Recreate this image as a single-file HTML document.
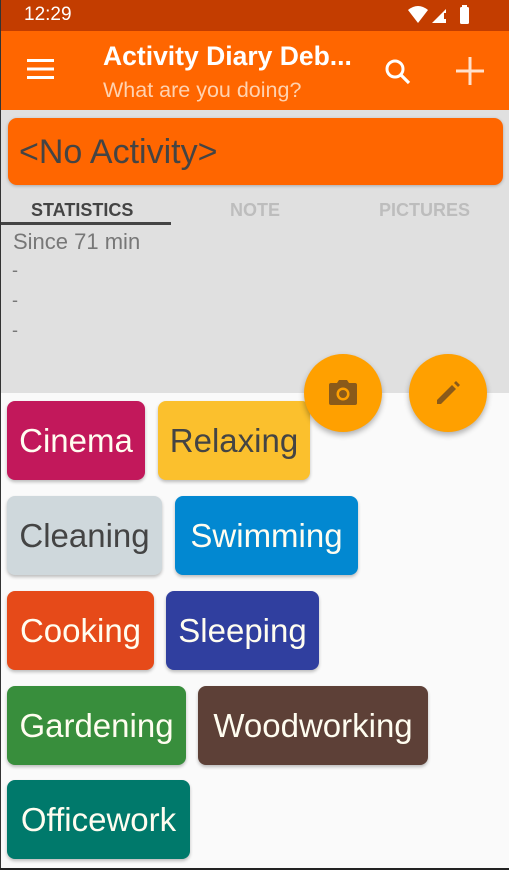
<!DOCTYPE html>
<html><head><meta charset="utf-8">
<style>
*{margin:0;padding:0;box-sizing:border-box}
body{width:509px;height:870px;overflow:hidden;font-family:"Liberation Sans",Roboto,sans-serif;background:#fafafa;position:relative}
.abs{position:absolute}
#edgeL{left:0;top:0;width:1px;height:870px;background:#333;z-index:9}
#edgeB{left:0;top:868px;width:509px;height:2px;background:#222;z-index:9}
#status{left:0;top:0;width:509px;height:31px;background:#c33d00;color:#fff;font-size:19px}
#bar{left:0;top:31px;width:509px;height:79px;background:#ff6600}
#gray{left:0;top:110px;width:509px;height:283px;background:#e0e0e0}
#card{left:8px;top:118px;width:495px;height:67px;background:#ff6600;border-radius:9px;box-shadow:0 1px 3px rgba(0,0,0,.25);color:#444;font-size:34px;line-height:69px;padding-left:11px}
.tab{top:200px;font-size:18px;font-weight:bold;color:#bdbdbd}
.chip{height:79px;border-radius:8px;font-size:33px;line-height:80px;text-align:center;color:#fffdf0;box-shadow:0 2px 3px rgba(0,0,0,.25);white-space:nowrap}
.fab{width:78px;height:78px;border-radius:50%;background:#ffa000;box-shadow:0 3px 6px rgba(0,0,0,.3);display:flex;align-items:center;justify-content:center}
.dash{left:12px;font-size:18px;color:#777}
</style></head><body>
<div class="abs" id="edgeL"></div><div class="abs" id="edgeB"></div>
<div class="abs" id="status">
 <div class="abs" style="left:24px;top:4px">12:29</div>
 <svg class="abs" style="left:408px;top:5px" width="64" height="20" viewBox="0 0 64 20">
  <path d="M0 5 Q10 -3 20 5 L10 18 Z" fill="#fff"/>
  <path d="M24 18 L38 4 L38 18 Z" fill="#fff"/>
  <rect x="36" y="8" width="2" height="6" fill="#c33d00"/>
  <rect x="52" y="2" width="9" height="17" rx="1.5" fill="#fff"/><rect x="54" y="0" width="5" height="3" fill="#fff"/>
 </svg>
</div>
<div class="abs" id="bar">
 <svg class="abs" style="left:27px;top:28px" width="27" height="20"><rect y="0" width="27" height="3" fill="#fff"/><rect y="8.5" width="27" height="3" fill="#fff"/><rect y="17" width="27" height="3" fill="#fff"/></svg>
 <div class="abs" style="left:103px;top:10px;color:#fff;font-size:26.5px;font-weight:bold">Activity Diary Deb...</div>
 <div class="abs" style="left:103px;top:47px;color:#ffd2b0;font-size:21.5px">What are you doing?</div>
 <svg class="abs" style="left:384px;top:27px" width="28" height="28" viewBox="0 0 28 28"><circle cx="11" cy="11" r="8" stroke="#fff" stroke-width="3" fill="none"/><line x1="17" y1="17" x2="25" y2="25" stroke="#fff" stroke-width="3.2"/></svg>
 <svg class="abs" style="left:456px;top:26px" width="28" height="28"><rect x="12.5" y="0" width="3" height="28" fill="#ffe0cc"/><rect x="0" y="12.5" width="28" height="3" fill="#ffe0cc"/></svg>
</div>
<div class="abs" id="gray"></div>
<div class="abs" id="card">&lt;No Activity&gt;</div>
<div class="abs tab" style="left:31px;color:#444">STATISTICS</div>
<div class="abs tab" style="left:230px">NOTE</div>
<div class="abs tab" style="left:379px">PICTURES</div>
<div class="abs" style="left:0;top:222px;width:171px;height:3px;background:#444"></div>
<div class="abs" style="left:13px;top:229px;font-size:22px;color:#777">Since 71 min</div>
<div class="abs dash" style="top:260px">-</div>
<div class="abs dash" style="top:290px">-</div>
<div class="abs dash" style="top:320px">-</div>

<div class="abs chip" style="left:7px;top:401px;width:138px;background:#c2185b">Cinema</div>
<div class="abs chip" style="left:158px;top:401px;width:152px;background:#fbc02d;color:#444">Relaxing</div>
<div class="abs chip" style="left:7px;top:496px;width:155px;background:#cfd8dc;color:#444">Cleaning</div>
<div class="abs chip" style="left:175px;top:496px;width:183px;background:#0288d1">Swimming</div>
<div class="abs chip" style="left:7px;top:591px;width:147px;background:#e64a19">Cooking</div>
<div class="abs chip" style="left:166px;top:591px;width:153px;background:#303f9f">Sleeping</div>
<div class="abs chip" style="left:7px;top:686px;width:179px;background:#388e3c">Gardening</div>
<div class="abs chip" style="left:198px;top:686px;width:230px;background:#5d4037">Woodworking</div>
<div class="abs chip" style="left:7px;top:780px;width:183px;background:#00796b">Officework</div>

<div class="abs fab" style="left:304px;top:354px">
 <svg width="30" height="26" viewBox="0 0 30 26"><path d="M9 3 L11 0 H19 L21 3 H27 Q29 3 29 5 V23 Q29 25 27 25 H3 Q1 25 1 23 V5 Q1 3 3 3 Z" fill="#8a5a1a"/><circle cx="15" cy="14" r="6.5" fill="#ffa000"/><circle cx="15" cy="14" r="4" fill="#8a5a1a"/></svg>
</div>
<div class="abs fab" style="left:409px;top:354px">
 <svg width="26" height="26" viewBox="0 0 26 26"><path d="M2 20 L17 5 L21 9 L6 24 H2 Z" fill="#8a5a1a"/><path d="M19 3 L21 1 L25 5 L23 7 Z" fill="#8a5a1a"/></svg>
</div>
</body></html>
